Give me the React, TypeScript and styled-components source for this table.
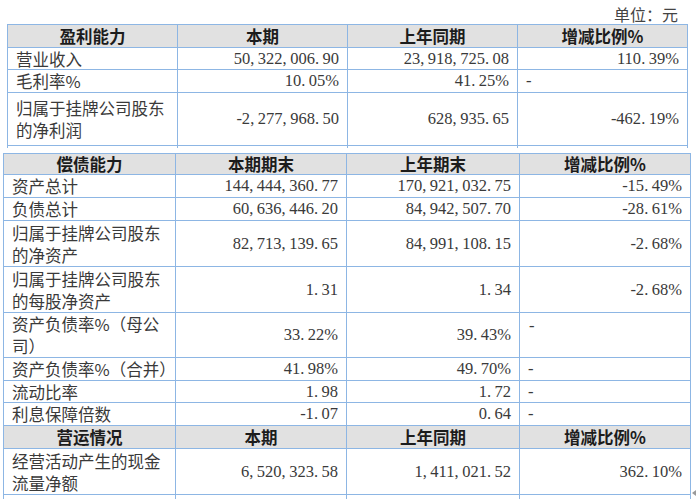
import React from "react";
import styled, { createGlobalStyle } from "styled-components";

const LINE = "#8db6e4";

const Global = createGlobalStyle`
  html, body { margin: 0; padding: 0; background: #ffffff; overflow: hidden; }
  body { font-family: "Noto Sans CJK SC", "Noto Sans", sans-serif; color: #3a3a3a; }
`;

const Page = styled.div`
  position: relative;
  width: 697px;
  height: 499px;
  overflow: hidden;
`;

const UnitBar = styled.div`
  height: 24px;
  box-sizing: border-box;
  display: flex;
  justify-content: flex-end;
  padding: 5px 19px 0 0;
  font-size: 16px;
  line-height: 19px;
  color: #444;
`;

const Grid = styled.div<{ $cols: string; $rows: string; $left: number; $clip?: number; $gap?: number }>`
  display: grid;
  width: max-content;
  grid-template-columns: ${(p) => p.$cols};
  grid-template-rows: ${(p) => p.$rows};
  margin-left: ${(p) => p.$left}px;
  margin-top: ${(p) => p.$gap ?? 0}px;
  border-top: 1px solid ${LINE};
  border-left: 1px solid ${LINE};
  box-sizing: border-box;
  ${(p) => (p.$clip ? `height: ${p.$clip}px; overflow: hidden;` : "")}
`;

const Cell = styled.div<{ $align: "left" | "right" | "center"; $head?: boolean; $top?: boolean }>`
  box-sizing: border-box;
  min-height: 0;
  border-right: 1px solid ${LINE};
  border-bottom: 1px solid ${LINE};
  background: ${(p) => (p.$head ? "#e1e1e1" : "#ffffff")};
  display: flex;
  align-items: ${(p) => (p.$top ? "flex-start" : "center")};
  justify-content: ${(p) =>
    p.$align === "left" ? "flex-start" : p.$align === "right" ? "flex-end" : "center"};
  padding: ${(p) => (p.$top ? "3px 8px 0 9px" : "0 8px 0 8px")};
`;

const Label = styled.span`
  font-size: 16.5px;
  line-height: 22px;
  color: #3a3a3a;
  white-space: nowrap;
`;

const HeadText = styled.span`
  font-size: 16.5px;
  line-height: 20px;
  font-weight: 700;
  color: #1c1c1c;
  white-space: nowrap;
`;

const NumText = styled.span`
  font-family: "Liberation Serif", "Times New Roman", serif;
  font-size: 16.5px;
  line-height: 20px;
  color: #3a3a3a;
  white-space: nowrap;
`;

const Punct = styled.span`
  letter-spacing: 3.5px;
`;

const Handle = styled.svg`
  position: absolute;
  left: 691px;
  top: 489px;
`;

type Row = {
  h: number;
  head?: boolean;
  cells: string[];
};

const Num = ({ v }: { v: string }) => (
  <>
    {v.split(/([,.])/).map((s, i) =>
      /^[,.]$/.test(s) ? <Punct key={i}>{s}</Punct> : <React.Fragment key={i}>{s}</React.Fragment>
    )}
  </>
);

const Lines = ({ text }: { text: string }) => (
  <>
    {text.split("/").map((t, i, arr) => (
      <React.Fragment key={i}>
        {t}
        {i < arr.length - 1 && <br />}
      </React.Fragment>
    ))}
  </>
);

const TableBlock = ({
  rows,
  cols,
  left,
  clip,
  gap,
}: {
  rows: Row[];
  cols: string;
  left: number;
  clip?: number;
  gap?: number;
}) => (
  <Grid
    $cols={cols}
    $rows={rows.map((r) => `${r.h}px`).join(" ")}
    $left={left}
    $clip={clip}
    $gap={gap}
  >
    {rows.map((r, ri) =>
      r.cells.map((c, ci) => {
        const key = `${ri}-${ci}`;
        if (r.head) {
          return (
            <Cell key={key} $align="center" $head>
              <HeadText>{c}</HeadText>
            </Cell>
          );
        }
        if (ci === 0) {
          return (
            <Cell key={key} $align="left">
              <Label>
                <Lines text={c} />
              </Label>
            </Cell>
          );
        }
        if (c === "-" || c === "^-") {
          return (
            <Cell key={key} $align="left" $top={c === "^-"}>
              <NumText>-</NumText>
            </Cell>
          );
        }
        return (
          <Cell key={key} $align="right">
            <NumText>
              <Num v={c} />
            </NumText>
          </Cell>
        );
      })
    )}
  </Grid>
);

const profit: Row[] = [
  { h: 23, head: true, cells: ["盈利能力", "本期", "上年同期", "增减比例%"] },
  { h: 22, cells: ["营业收入", "50,322,006.90", "23,918,725.08", "110.39%"] },
  { h: 23, cells: ["毛利率%", "10.05%", "41.25%", "-"] },
  { h: 53, cells: ["归属于挂牌公司股东/的净利润", "-2,277,968.50", "628,935.65", "-462.19%"] },
  { h: 23, cells: ["", "", "", ""] },
];

const debt: Row[] = [
  { h: 21, head: true, cells: ["偿债能力", "本期期末", "上年期末", "增减比例%"] },
  { h: 23, cells: ["资产总计", "144,444,360.77", "170,921,032.75", "-15.49%"] },
  { h: 23, cells: ["负债总计", "60,636,446.20", "84,942,507.70", "-28.61%"] },
  { h: 46, cells: ["归属于挂牌公司股东/的净资产", "82,713,139.65", "84,991,108.15", "-2.68%"] },
  { h: 46, cells: ["归属于挂牌公司股东/的每股净资产", "1.31", "1.34", "-2.68%"] },
  { h: 45, cells: ["资产负债率%（母公/司）", "33.22%", "39.43%", "^-"] },
  { h: 23, cells: ["资产负债率%（合并）", "41.98%", "49.70%", "-"] },
  { h: 22, cells: ["流动比率", "1.98", "1.72", "-"] },
  { h: 23, cells: ["利息保障倍数", "-1.07", "0.64", "-"] },
  { h: 23, head: true, cells: ["营运情况", "本期", "上年同期", "增减比例%"] },
  { h: 46, cells: ["经营活动产生的现金/流量净额", "6,520,323.58", "1,411,021.52", "362.10%"] },
  { h: 23, cells: ["", "", "", ""] },
];

export default function App() {
  return (
    <Page>
      <Global />
      <UnitBar>单位：元</UnitBar>
      <TableBlock rows={profit} cols="170px 170px 170px 170px" left={7} clip={124} />
      <TableBlock rows={debt} cols="172px 171px 173px 171px" left={3} gap={5} />
      <Handle width="6" height="8" viewBox="0 0 6 8">
        <path d="M5 1 L1 4 L5 7 Z" fill="#9a9a9a" />
      </Handle>
    </Page>
  );
}
